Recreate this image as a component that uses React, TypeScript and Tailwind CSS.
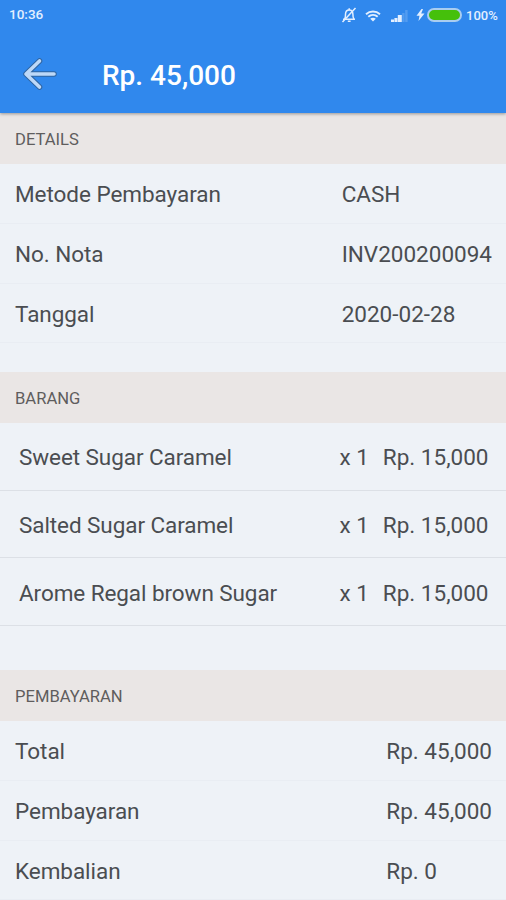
import type { ReactNode } from "react";

type Line = { label: string; value: string };

const details: Line[] = [
  { label: "Metode Pembayaran", value: "CASH" },
  { label: "No. Nota", value: "INV200200094" },
  { label: "Tanggal", value: "2020-02-28" },
];

const items = [
  { name: "Sweet Sugar Caramel", qty: 1, price: "Rp. 15,000" },
  { name: "Salted Sugar Caramel", qty: 1, price: "Rp. 15,000" },
  { name: "Arome Regal brown Sugar", qty: 1, price: "Rp. 15,000" },
];

const payment: Line[] = [
  { label: "Total", value: "Rp. 45,000" },
  { label: "Pembayaran", value: "Rp. 45,000" },
  { label: "Kembalian", value: "Rp. 0" },
];

function StatusBar() {
  return (
    <div className="flex h-[30px] items-center justify-between pl-[9px] pr-2 text-[13.5px] font-medium text-[#e3efff]">
      <span>10:36</span>
      <div className="flex items-center">
        {/* muted bell */}
        <svg className="h-4 w-4" viewBox="0 0 16 16" fill="none" stroke="currentColor" strokeWidth="1.5">
          <path d="M2 12.2h12M3.6 12c1-1.2.9-2.6.9-4.7C4.5 4.7 6 2.9 8.2 2.9s3.7 1.8 3.7 4.4c0 2.1 0 3.5 1 4.7" />
          <path d="M8.2 1.2v1.7M6.8 14.3h2.8M14.5 1 1.5 15" />
        </svg>
        <svg className="ml-2 h-[13px] w-4" viewBox="0 0 16 13" fill="none" stroke="currentColor" strokeWidth="1.9">
          <path d="M1 5.2c4-3.6 10-3.6 14 0M3.3 7.8c2.7-2.4 6.7-2.4 9.4 0" />
          <path d="M5.2 9.7c1.6-1.4 4-1.4 5.6 0L8 12.6z" fill="currentColor" stroke="none" />
        </svg>
        <svg className="ml-[10px] mt-px h-3 w-[17px]" viewBox="0 0 17 12" fill="currentColor">
          <path d="M0 9.5h3V12H0zM3.4 8h3v4h-3zM6.8 5h4v7h-4z" />
          <path d="M11.2 3h2.4v9h-2.4zM14.2 0h2.4v12h-2.4z" opacity="0.2" />
        </svg>
        <svg className="ml-[8px] h-3 w-[9px]" viewBox="0 0 9 12" fill="currentColor">
          <path d="M5.5 0 .5 6.8h3L2.5 12l6-7.4H5.2L7 0z" />
        </svg>
        <div className="ml-[2px] h-[14px] w-[35px] rounded-full border-2 border-[#a9cdf0] bg-[#45c00b]" />
        <span className="ml-1 w-[32px] text-[13px]">100%</span>
      </div>
    </div>
  );
}

function Header() {
  return (
    <header className="relative z-10 h-[113px] bg-[#3088ed] shadow-[0_1px_3px_rgba(0,0,0,0.35)]">
      <StatusBar />
      <div className="flex h-[88px] items-center pl-[23px]">
        <svg className="h-8 w-[34px]" viewBox="0 0 34 32" fill="none" strokeLinecap="round" strokeLinejoin="round">
          <path d="M16.5 3 3 16l13.5 13M4 16h27" stroke="#2f64a0" strokeWidth="5.5" />
          <path d="M16.5 3 3 16l13.5 13M4 16h27" stroke="#bdd8f8" strokeWidth="3.6" />
        </svg>
        <h1 className="ml-[45px] pt-[3px] text-[28px] font-medium text-white">Rp. 45,000</h1>
      </div>
    </header>
  );
}

function Section({ title, children }: { title: string; children: ReactNode }) {
  return (
    <section>
      <h2 className="flex h-[51px] items-center bg-[#eae6e5] pl-[15px] pt-[3px] text-[16.6px] font-normal text-[#5f5d5d]">
        {title}
      </h2>
      {children}
    </section>
  );
}

function Lines({ lines }: { lines: Line[] }) {
  return (
    <dl className="grid grid-cols-[1fr_auto] pl-[15px] pr-[14px]">
      {lines.map((line) => (
        <div
          key={line.label}
          className="col-span-2 -ml-[15px] -mr-[14px] grid h-[59.8px] grid-cols-subgrid items-center border-b border-[#e9edf3] pl-[15px] pr-[14px] pt-[1.8px]"
        >
          <dt className="tracking-[-0.05px]">{line.label}</dt>
          <dd>{line.value}</dd>
        </div>
      ))}
    </dl>
  );
}

export default function App() {
  return (
    <div className="h-[900px] w-[506px] overflow-hidden bg-[#eef2f7] font-['Roboto',sans-serif] text-[22.5px] leading-none text-[#4a4d51]">
      <Header />
      <main>
        <Section title="DETAILS">
          <div className="h-[208px]">
            <Lines lines={details} />
          </div>
        </Section>
        <Section title="BARANG">
          <ul className="h-[247px]">
            {items.map((item) => (
              <li
                key={item.name}
                className="flex h-[67.7px] items-center border-b border-[#dce0e6] pl-[19px] pr-[17.5px] pt-[2.8px]"
              >
                <span className="flex-1 tracking-[-0.08px]">{item.name}</span>
                <span>x {item.qty}</span>
                <span className="ml-[14px]">{item.price}</span>
              </li>
            ))}
          </ul>
        </Section>
        <Section title="PEMBAYARAN">
          <Lines lines={payment} />
        </Section>
      </main>
    </div>
  );
}
